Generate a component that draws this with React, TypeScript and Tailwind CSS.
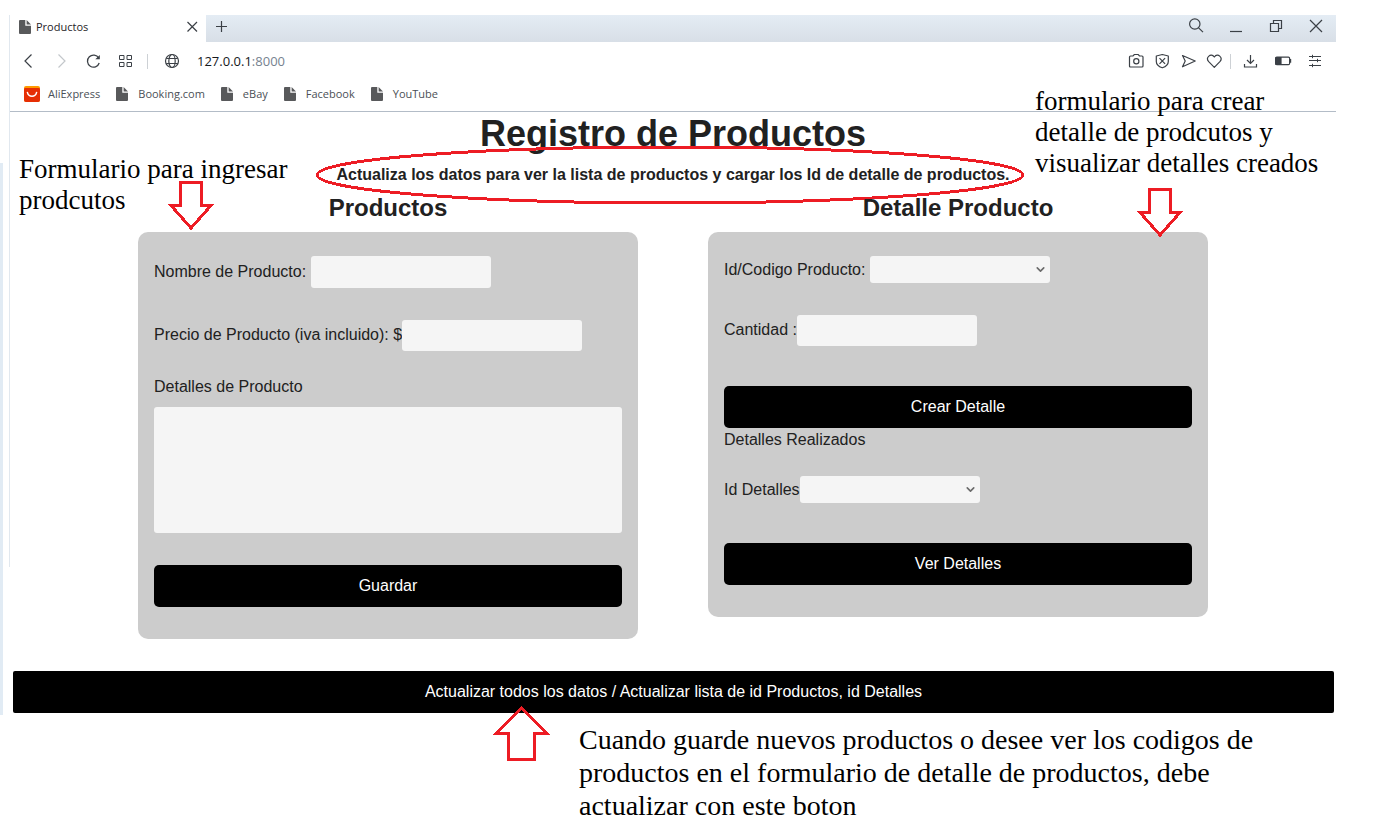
import React from "react";
import { ChevronDown } from "lucide-react";

const bookmarks = ["Booking.com", "eBay", "Facebook", "YouTube"];

function FileIcon() {
  return (
    <svg width="12" height="14" viewBox="0 0 12 14" className="shrink-0" aria-hidden="true">
      <path d="M0 1Q0 0 1 0H6.3V5.7H12V13Q12 14 11 14H1Q0 14 0 13Z" fill="#58595b" />
      <path d="M7.6 0L12 4.4H7.6Z" fill="#58595b" />
    </svg>
  );
}

function AliIcon() {
  return (
    <svg width="16" height="16" viewBox="0 0 16 16" className="shrink-0" aria-hidden="true">
      <rect width="16" height="16" rx="2" fill="#ff9a00" />
      <path d="M0 3.4Q0 2 1.4 2H14.6Q16 2 16 3.4V14Q16 16 14 16H2Q0 16 0 14Z" fill="#e62e04" />
      <path d="M3.4 6.4C4.6 11.6 11.4 11.6 12.6 6.4" fill="none" stroke="#fff" strokeWidth="1.5" strokeLinecap="round" />
    </svg>
  );
}

function IconButton({ label, children, className = "text-[#3b4046]" }: { label: string; children: React.ReactNode; className?: string }) {
  return (
    <button type="button" aria-label={label} className={`flex size-5 shrink-0 items-center justify-center ${className}`}>
      <svg width="20" height="20" viewBox="0 0 20 20" fill="none" stroke="currentColor" strokeWidth="1.2" aria-hidden="true">
        {children}
      </svg>
    </button>
  );
}

function TabStrip() {
  return (
    <div className="flex h-[27px]">
      <div className="flex w-[196px] items-center bg-white pb-1 pl-[9px] pr-1">
        <FileIcon />
        <span className="ml-[5px] flex-1 text-[11px] text-[#1f2328]">Productos</span>
        <IconButton label="Cerrar pestaña">
          <path d="M5.5 5L15 14.5M15 5L5.5 14.5" />
        </IconButton>
      </div>
      <div className="flex flex-1 items-center bg-linear-to-b from-[#e4ecf4] to-[#d8dfe7] pb-1 pl-[6px] pr-[10px]">
        <IconButton label="Nueva pestaña">
          <path d="M9.5 4V15M4 9.5H15" />
        </IconButton>
        <div className="ml-auto flex gap-5">
          <IconButton label="Buscar">
            <circle cx="8.8" cy="7" r="5.2" />
            <path d="M12.6 10.8L17 15.2" />
          </IconButton>
          <IconButton label="Minimizar">
            <path d="M4 14.5H16" />
          </IconButton>
          <IconButton label="Restaurar">
            <path d="M4.5 6.5H12.5V14.5H4.5ZM7.5 6.5V3.5H15.5V11.5H12.5" />
          </IconButton>
          <IconButton label="Cerrar">
            <path d="M4 3L16 15M16 3L4 15" />
          </IconButton>
        </div>
      </div>
    </div>
  );
}

function AddressBar() {
  return (
    <div className="flex h-[38px] items-center pl-[9px] pr-[11px]">
      <div className="flex gap-3">
        <IconButton label="Atrás">
          <path d="M12.5 3.5L6 10L12.5 16.5" />
        </IconButton>
        <IconButton label="Adelante" className="text-[#c3c7cb]">
          <path d="M7.5 3.5L14 10L7.5 16.5" />
        </IconButton>
        <IconButton label="Recargar">
          <path d="M15.7 7.2A6 6 0 1 0 16.2 12" strokeWidth="1.3" />
          <path d="M16.8 4V8.3H12.3Z" fill="currentColor" stroke="none" />
        </IconButton>
        <IconButton label="Inicio rápido">
          <path d="M4.5 4.5H9V8.5H4.5ZM12 4.5H16.5V8.5H12ZM4.5 11.5H9V15.5H4.5ZM12 11.5H16.5V15.5H12Z" strokeWidth="1" strokeLinejoin="round" />
        </IconButton>
      </div>
      <div className="ml-3 mr-[14px] h-[15px] w-px bg-[#cdd1d5]" />
      <IconButton label="Información del sitio">
        <circle cx="10" cy="10" r="6.5" />
        <ellipse cx="10" cy="10" rx="3.2" ry="6.5" />
        <path d="M4.3 7.5H15.7M4.3 12.5H15.7" />
      </IconButton>
      <div className="ml-[15px] flex-1 text-[13px] text-[#16191c]">
        127.0.0.1<span className="text-[#76828f]">:8000</span>
      </div>
      <div className="flex gap-[6px]">
        <IconButton label="Captura">
          <path d="M2.5 6Q2.5 5 3.5 5H6L7.3 3.5H11.2L12.5 5H15Q16 5 16 6V15Q16 16 15 16H3.5Q2.5 16 2.5 15Z" />
          <circle cx="9.3" cy="10.3" r="2.6" />
        </IconButton>
        <IconButton label="Bloqueador">
          <path d="M9.3 3.5L15.3 5V10.5Q15.3 14.8 9.3 16.8Q3.3 14.8 3.3 10.5V5Z" strokeLinejoin="round" />
          <path d="M6.5 7.2L12.1 12.8M12.1 7.2L6.5 12.8" />
        </IconButton>
        <IconButton label="Enviar">
          <path d="M3.5 4.5L16.2 10L3.5 15.8L6.2 10Z" strokeLinejoin="round" />
        </IconButton>
        <IconButton label="Favoritos">
          <path d="M9.3 16.3L3.7 10.7C0.2 6.6 5.8 1.4 9.3 6C12.8 1.4 18.4 6.6 14.9 10.7Z" strokeLinejoin="round" />
        </IconButton>
      </div>
      <div className="ml-[5px] mr-[10px] h-[15px] w-px bg-[#cdd1d5]" />
      <div className="flex gap-3">
        <IconButton label="Descargas">
          <path d="M9.5 4V12.5M6 9L9.5 12.5L13 9M3.5 13V16H15.5V13" />
        </IconButton>
        <IconButton label="Batería">
          <rect x="2.6" y="6.1" width="14" height="7.6" rx="1.2" />
          <path d="M3 6.5H8V13.3H3Z" fill="currentColor" />
          <path d="M17.6 8V11.8" />
        </IconButton>
        <IconButton label="Configuración">
          <path d="M4 5.5H16M4 9.5H16M4 14.5H16M7.5 3.8V7.2M12.5 7.8V11.2M7.5 12.8V16.2" strokeWidth="1" />
        </IconButton>
      </div>
    </div>
  );
}

function BookmarkBar() {
  return (
    <nav className="flex h-[31px] items-center gap-4 pb-[3px] pl-[14px] text-[11px] text-[#4b5056]">
      <a href="#aliexpress" className="flex items-center gap-2">
        <AliIcon />
        AliExpress
      </a>
      {bookmarks.map((name) => (
        <a key={name} href={`#${name}`} className="flex items-center gap-[10px]">
          <FileIcon />
          {name}
        </a>
      ))}
    </nav>
  );
}

function DownArrow({ className }: { className: string }) {
  return (
    <svg width="46" height="52" viewBox="0 0 46 52" className={`pointer-events-none absolute ${className}`} shapeRendering="crispEdges" aria-hidden="true">
      <path d="M12.5 2.5H33.5V25.5H43L23 48L3 25.5H12.5Z" fill="none" stroke="#ed1c24" strokeWidth="3" />
    </svg>
  );
}

const field = "w-[180px] rounded-[3px] bg-[#f5f5f5] px-2 outline-none";

function Select({ id }: { id: string }) {
  return (
    <span className="relative flex">
      <select id={id} className={`${field} h-[27px] appearance-none`} />
      <ChevronDown size={13} strokeWidth={3} className="pointer-events-none absolute right-[3px] top-[7px] text-[#6b6b6b]" />
    </span>
  );
}

function BlackButton({ children, className }: { children: React.ReactNode; className: string }) {
  return (
    <button type="button" className={`h-[42px] w-full bg-black text-white ${className}`}>
      {children}
    </button>
  );
}

const card = "rounded-[10px] bg-[#ccc] px-4 pb-8 pt-6";
const heading = "mb-[10px] text-center text-[24px] font-bold leading-[29px]";

export default function App() {
  return (
    <div className="relative flex min-h-screen overflow-hidden bg-white pt-[15px] font-['Liberation_Sans',Arial,sans-serif] text-[16px] leading-6 text-[#212121]">
      <div className="mr-[6px] mt-[148px] h-[552px] w-[3px] shrink-0 bg-[#e1ebf4]" />
      <div className="h-[552px] w-px shrink-0 bg-[#e1e8ef]" />

      <div className="mr-[56px] min-w-0 flex-1">
        <header className="border-b border-[#b3bcc7] font-['Open_Sans','Noto_Sans',sans-serif] leading-4">
          <TabStrip />
          <AddressBar />
          <BookmarkBar />
        </header>

        <main>
          <h1 className="text-center text-[36px] font-bold leading-[43px]">Registro de Productos</h1>
          <div className="relative mt-2 text-center font-bold">
            <p>Actualiza los datos para ver la lista de productos y cargar los Id de detalle de productos.</p>
            <svg width="714" height="60" viewBox="0 0 714 60" className="pointer-events-none absolute -top-[18px] left-1/2 -ml-[360px]" shapeRendering="crispEdges" aria-hidden="true">
              <ellipse cx="357" cy="30" rx="353" ry="28" fill="none" stroke="#ed1c24" strokeWidth="3" />
            </svg>
          </div>

          <div className="mt-[6px] flex items-start justify-center gap-[70px]">
            <section className="relative w-[500px]">
              <h2 className={heading}>Productos</h2>
              <DownArrow className="-top-[13px] left-[30px]" />
              <form className={card}>
                <div className="flex items-center gap-[5px]">
                  <label htmlFor="nombre">Nombre de Producto:</label>
                  <input id="nombre" type="text" className={`${field} h-8`} />
                </div>
                <div className="mt-8 flex items-start">
                  <label htmlFor="precio" className="leading-[30px]">
                    Precio de Producto (iva incluido): $
                  </label>
                  <input id="precio" type="text" className={`${field} h-[31px]`} />
                </div>
                <label htmlFor="detalles" className="mt-6 block">
                  Detalles de Producto
                </label>
                <textarea id="detalles" className="mt-2 block h-[126px] w-full resize-none rounded-[3px] bg-[#f5f5f5] p-2 outline-none" />
                <BlackButton className="mt-8 rounded-[5px]">Guardar</BlackButton>
              </form>
            </section>

            <section className="relative w-[500px]">
              <h2 className={heading}>Detalle Producto</h2>
              <DownArrow className="-top-[6px] left-[429px]" />
              <form className={card}>
                <div className="flex items-center gap-[5px]">
                  <label htmlFor="codigo">Id/Codigo Producto:</label>
                  <Select id="codigo" />
                </div>
                <div className="mt-8 flex items-start">
                  <label htmlFor="cantidad" className="leading-[30px]">
                    Cantidad :
                  </label>
                  <input id="cantidad" type="text" className={`${field} h-[31px]`} />
                </div>
                <BlackButton className="mt-10 rounded-[5px]">Crear Detalle</BlackButton>
                <p>Detalles Realizados</p>
                <div className="mt-6 flex items-center">
                  <label htmlFor="idDetalles">Id Detalles</label>
                  <Select id="idDetalles" />
                </div>
                <BlackButton className="mt-10 rounded-[5px]">Ver Detalles</BlackButton>
              </form>
            </section>
          </div>

          <div className="relative mt-8 pl-[3px] pr-[2px]">
            <BlackButton className="rounded-[2px]">Actualizar todos los datos / Actualizar lista de id Productos, id Detalles</BlackButton>
            <svg width="58" height="58" viewBox="0 0 58 58" className="pointer-events-none absolute left-1/2 top-[34px] -ml-[180px]" shapeRendering="crispEdges" aria-hidden="true">
              <path d="M28.5 3L54 28.5H41.5V54.5H15.5V28.5H3Z" fill="none" stroke="#ed1c24" strokeWidth="3" />
            </svg>
          </div>
        </main>

        <p className="ml-[569px] mt-[10px] max-w-[700px] font-['Liberation_Serif','Times_New_Roman',serif] text-[28px] leading-[33px] text-black">
          Cuando guarde nuevos productos o desee ver los codigos de productos en el formulario de detalle de productos, debe actualizar con este boton
        </p>
      </div>

      <p className="absolute left-[19px] top-[154px] w-[290px] font-['Liberation_Serif','Times_New_Roman',serif] text-[27px] leading-[31px] text-black">
        Formulario para ingresar prodcutos
      </p>
      <p className="absolute right-[57px] top-[86px] w-[300px] font-['Liberation_Serif','Times_New_Roman',serif] text-[27px] leading-[31px] text-black">
        formulario para crear detalle de prodcutos y visualizar detalles creados
      </p>
    </div>
  );
}
